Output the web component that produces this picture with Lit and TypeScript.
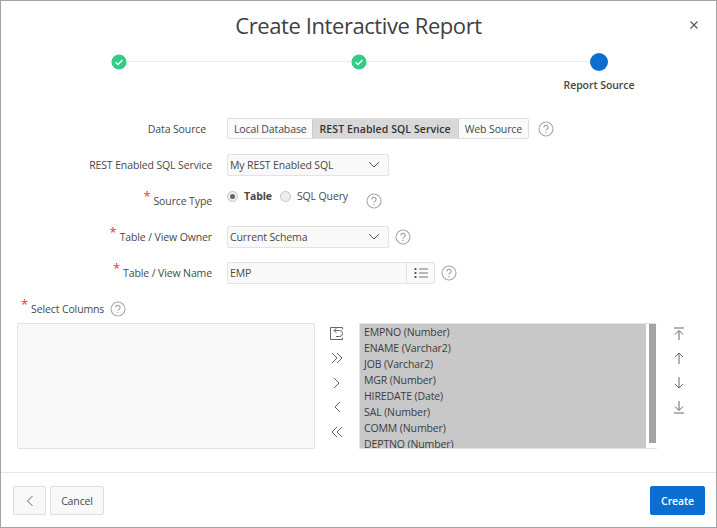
import { LitElement, html, css } from "lit";
import { customElement } from "lit/decorators.js";

const help = html`<svg class="help" width="16" height="16" viewBox="0 0 16 16"><circle cx="8" cy="8" r="7" fill="none" stroke="#a8a8a8" stroke-width="1.1"/><path d="M5.9 6.4a2.1 2.1 0 1 1 3.3 1.7c-.8.5-1.2.9-1.2 1.7" fill="none" stroke="#9a9a9a" stroke-width="1.1"/><circle cx="8" cy="11.6" r=".7" fill="#9a9a9a"/></svg>`;
const check = html`<svg width="16" height="16" viewBox="0 0 16 16"><circle cx="8" cy="8" r="7.5" fill="#2ecc84"/><path d="M4.6 8.2l2.4 2.3 4.4-4.6" fill="none" stroke="#fff" stroke-width="1.5"/></svg>`;
const chev = html`<svg class="chev" width="12" height="8" viewBox="0 0 12 8"><path d="M1 1l5 5 5-5" fill="none" stroke="#555" stroke-width="1"/></svg>`;
const icon = (d: string) => html`<svg class="ic" width="16" height="16" viewBox="0 0 16 16"><path d=${d} fill="none" stroke="#666" stroke-width="1"/></svg>`;
const req = html`<span class="req">*</span>`;

const columns = ["EMPNO (Number)", "ENAME (Varchar2)", "JOB (Varchar2)", "MGR (Number)", "HIREDATE (Date)", "SAL (Number)", "COMM (Number)", "DEPTNO (Number)"];

@customElement("app-root")
export class AppRoot extends LitElement {
  static styles = css`
    :host { display: block; width: 717px; height: 528px; box-sizing: border-box; border: 1px solid #a3a3a3; background: #fff; font-family: "Open Sans", "Noto Sans", sans-serif; font-size: 10.5px; letter-spacing: -0.12px; color: #484848; overflow: hidden; }
    .page { display: flex; flex-direction: column; height: 100%; }
    .head { position: relative; height: 47px; display: flex; justify-content: center; align-items: center; }
    h1 { margin: 0; font-size: 22px; font-weight: 400; color: #404040; letter-spacing: -0.42px; line-height: 30px; padding-top: 1px; }
    .close { position: absolute; right: 17px; top: 19px; display: flex; }
    .wizard { display: grid; grid-template-columns: 240px 239px 120px; margin-left: 110px; height: 54px; }
    .step { position: relative; display: flex; flex-direction: column; align-items: flex-start; }
    .step .dot { height: 28px; display: flex; align-items: center; }
    .step .line { position: absolute; left: 0; right: 0; top: 13px; height: 1px; background: #ececec; }
    .step svg { position: relative; }
    .cur { width: 18px; height: 18px; border-radius: 50%; background: #0a6fd0; position: relative; }
    .cur-wrap { position: relative; }
    .wlabel { position: absolute; top: 25px; left: -36px; width: 90px; text-align: center; white-space: nowrap; font-weight: 600; font-size: 10.5px; letter-spacing: -0.06px; color: #444; }
    .form { display: flex; flex-direction: column; padding-left: 16px; }
    .row { display: grid; grid-template-columns: 195px auto; align-items: center; column-gap: 15px; justify-content: start; }
    .lab { text-align: right; white-space: nowrap; position: relative; }
    .req { color: #f0303a; font-size: 13px; line-height: 8px; position: relative; top: -4px; margin-right: 3px; }
    .ctl { display: flex; align-items: center; gap: 6px; }
    .r1 { height: 21px; margin-top: 16px; }
    .r1 .lab { padding-right: 6px; }
    .r1 .ctl { gap: 9px; }
    .r2 { height: 22px; margin-top: 15px; }
    .r3 { height: 22px; margin-top: 14px; }
    .r3 .ctl { gap: 18px; }
    .r4 { height: 22px; margin-top: 14px; }
    .r5 { height: 22px; margin-top: 14px; }
    .seg { display: flex; height: 21px; border: 1px solid #dfdfdf; border-radius: 2px; box-sizing: border-box; background: #fafafa; }
    .seg span { display: flex; align-items: center; padding: 0 6px; white-space: nowrap; }
    .seg .first { padding-right: 5px; }
    .seg .on { background: #d8d8d8; font-weight: 600; letter-spacing: 0.09px; color: #333; border-left: 1px solid #ccc; border-right: 1px solid #ccc; padding: 0 7px; }
    .sel { box-sizing: border-box; height: 22px; border: 1px solid #e2e2e2; border-radius: 2px; background: #f9f9f9; display: flex; align-items: center; justify-content: space-between; padding: 0 8px 0 2px; width: 162px; }
    .inp { box-sizing: border-box; height: 22px; width: 208px; border: 1px solid #e2e2e2; border-radius: 2px; background: #f9f9f9; display: flex; align-items: center; padding-left: 2px; justify-content: space-between; }
    .listbtn { width: 27px; height: 100%; border-left: 1px solid #e2e2e2; display: flex; align-items: center; justify-content: center; }
    .radio { display: flex; align-items: center; gap: 6px; margin-top: -10px; }
    .rd { width: 9px; height: 9px; border-radius: 50%; border: 1px solid #c4c4c4; background: #eee; display: flex; align-items: center; justify-content: center; }
    .rd i { display: block; width: 5px; height: 5px; border-radius: 50%; background: #666; }
    .radios { display: flex; gap: 8px; }
    .help { flex: none; }
    .cols { display: flex; align-items: center; height: 16px; margin-top: 17px; padding-left: 4px; gap: 6px; }
    .shuttle { display: flex; margin-top: 6px; height: 126px; }
    .box { box-sizing: border-box; width: 298px; height: 126px; border: 1px solid #e4e4e4; background: #f8f8f8; border-radius: 1px; }
    .mid { width: 44px; display: flex; flex-direction: column; align-items: center; gap: 8.8px; padding-top: 2px; box-sizing: border-box; }
    .right { background: #fff; position: relative; overflow: hidden; border-top: 1px solid #e4e4e4; border-left: 1px solid #e4e4e4; border-right: 0; display: flex; }
    .items { background: #c8c8c8; width: 286px; height: 100%; overflow: hidden; padding-left: 4px; box-sizing: border-box; line-height: 16px; color: #3c3c3c; }
    .items div { white-space: nowrap; height: 16px; }
    .sb { width: 7px; margin-left: 3px; height: 119px; background: #a3a3a3; }
    .order { width: 44px; display: flex; flex-direction: column; align-items: center; gap: 8.3px; padding-top: 3px; }
    .foot { margin-top: auto; height: 55px; box-sizing: border-box; border-top: 1px solid #e6e6e6; display: flex; align-items: center; padding: 0 11px 0 12px; gap: 4px; }
    .btn { box-sizing: border-box; height: 29px; border: 1px solid #dedede; border-radius: 2px; background: #f8f8f8; display: flex; align-items: center; justify-content: center; padding-top: 1px; }
    .back { width: 33px; }
    .cancel { width: 54px; }
    .create { width: 55px; margin-left: auto; background: #0a6fd0; border-color: #0a6fd0; color: #fff; font-weight: 600; }
  `;

  render() {
    return html`<div class="page">
      <div class="head">
        <h1>Create Interactive Report</h1>
        <svg class="close" width="10" height="10" viewBox="0 0 10 10"><path d="M1.5 1.5l7 7M8.5 1.5l-7 7" stroke="#555" stroke-width="1.1"/></svg>
      </div>
      <div class="wizard">
        <div class="step"><div class="line"></div><div class="dot">${check}</div></div>
        <div class="step"><div class="line"></div><div class="dot">${check}</div></div>
        <div class="step"><div class="dot"><div class="cur-wrap"><div class="cur"></div><div class="wlabel">Report Source</div></div></div></div>
      </div>
      <div class="form">
        <div class="row r1"><div class="lab">Data Source</div><div class="ctl"><div class="seg"><span class="first">Local Database</span><span class="on">REST Enabled SQL Service</span><span>Web Source</span></div>${help}</div></div>
        <div class="row r2"><div class="lab">REST Enabled SQL Service</div><div class="ctl"><div class="sel">My REST Enabled SQL ${chev}</div></div></div>
        <div class="row r3"><div class="lab">${req}Source Type</div><div class="ctl"><div class="radios"><div class="radio"><span class="rd"><i></i></span><b style="font-weight:700">Table</b></div><div class="radio"><span class="rd"></span>SQL Query</div></div>${help}</div></div>
        <div class="row r4"><div class="lab">${req}Table / View Owner</div><div class="ctl"><div class="sel">Current Schema ${chev}</div>${help}</div></div>
        <div class="row r5"><div class="lab">${req}Table / View Name</div><div class="ctl"><div class="inp">EMP<div class="listbtn"><svg width="14" height="12" viewBox="0 0 14 12"><path d="M5 2h9M5 6h9M5 10h9" stroke="#777" stroke-width="1"/><circle cx="1.5" cy="2" r="1.1" fill="#444"/><circle cx="1.5" cy="6" r="1.1" fill="#444"/><circle cx="1.5" cy="10" r="1.1" fill="#444"/></svg></div></div>${help}</div></div>
        <div class="cols"><span>${req}Select Columns</span>${help}</div>
        <div class="shuttle">
          <div class="box"></div>
          <div class="mid">
            ${icon("M13.5 4.5V2.5h-12v12h12v-2M13.5 8.5a3 3 0 0 0-3-3H5M7.5 3L5 5.5 7.5 8M13.5 8.5a3 3 0 0 1-3 3H7")}
            ${icon("M3 3l5 5-5 5M8 3l5 5-5 5")}
            ${icon("M5 3l5 5-5 5")}
            ${icon("M11 3l-5 5 5 5")}
            ${icon("M8 3L3 8l5 5M13 3L8 8l5 5")}
          </div>
          <div class="box right">
            <div class="items">${columns.map((c) => html`<div>${c}</div>`)}</div>
            <div class="sb"></div>
          </div>
          <div class="order">
            ${icon("M3 2h10M8 14V5M4 8.5L8 4.5l4 4")}
            ${icon("M8 14V3M4 7l4-4 4 4")}
            ${icon("M8 2v11M4 9l4 4 4-4")}
            ${icon("M3 14h10M8 2v9M4 7.5l4 4 4-4")}
          </div>
        </div>
      </div>
      <div class="foot">
        <div class="btn back"><svg width="8" height="12" viewBox="0 0 8 12"><path d="M6.5 1L1.5 6l5 5" fill="none" stroke="#666" stroke-width="1"/></svg></div>
        <div class="btn cancel">Cancel</div>
        <div class="btn create">Create</div>
      </div>
    </div>`;
  }
}
